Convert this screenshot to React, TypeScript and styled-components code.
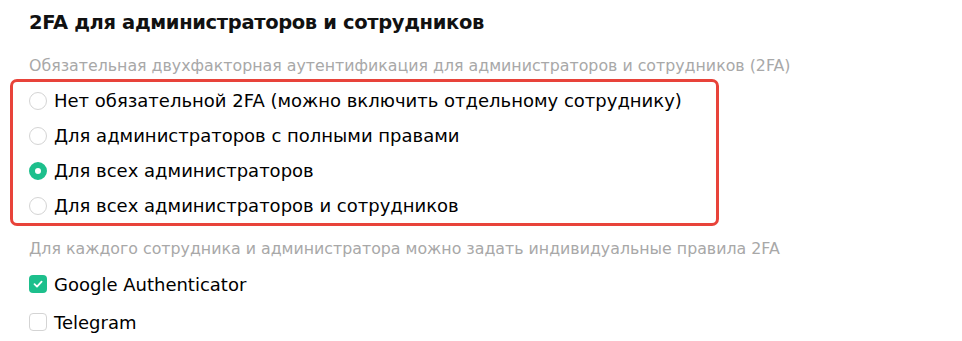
import { useState } from "react";
import styled, { createGlobalStyle } from "styled-components";

const GlobalStyle = createGlobalStyle`
	html, body {
		margin: 0;
		padding: 0;
		background: #ffffff;
	}
	body {
		font-family: "DejaVu Sans", "Noto Sans", sans-serif;
		color: #111111;
	}
`;

const Page = styled.div`
	width: 962px;
	height: 341px;
	box-sizing: border-box;
	padding: 9px 0 0 29px;
	overflow: hidden;
`;

const Title = styled.h2`
	margin: 0;
	font-size: 19.5px;
	font-weight: 700;
	line-height: 28px;
	letter-spacing: -0.35px;
	color: #111111;
`;

const Hint = styled.div<{ $top: number }>`
	margin-top: ${(props) => props.$top}px;
	font-size: 15.8px;
	line-height: 20px;
	color: #a8a8a8;
`;

const Highlight = styled.div`
	margin: 3px 0 0 -19px;
	width: 709px;
	box-sizing: border-box;
	border: 3px solid #e8433a;
	border-radius: 7px;
	padding: 1px 0 0 16px;
	display: flex;
	flex-direction: column;
`;

const OptionRow = styled.label`
	display: flex;
	align-items: center;
	gap: 7px;
	height: 35px;
	font-size: 18px;
	color: #000000;
	cursor: pointer;
`;

const Radio = styled.span<{ $checked: boolean }>`
	width: 18px;
	height: 18px;
	box-sizing: border-box;
	border-radius: 50%;
	flex-shrink: 0;
	background: #ffffff;
	border: ${(props) =>
		props.$checked ? "6px solid #1dbf8c" : "1.5px solid #d4d4d4"};
`;

const Methods = styled.div`
	display: flex;
	flex-direction: column;
	margin-top: 7px;
	gap: 2px;
`;

const CheckRow = styled.label`
	display: flex;
	align-items: center;
	gap: 7px;
	height: 36px;
	font-size: 18px;
	color: #000000;
	cursor: pointer;
`;

const Box = styled.span<{ $checked: boolean }>`
	width: 18px;
	height: 18px;
	box-sizing: border-box;
	border-radius: 4px;
	flex-shrink: 0;
	display: flex;
	align-items: center;
	justify-content: center;
	background: ${(props) => (props.$checked ? "#1dbf8c" : "#ffffff")};
	border: ${(props) => (props.$checked ? "none" : "1.5px solid #d4d4d4")};
`;

const options = [
	"Нет обязательной 2FA (можно включить отдельному сотруднику)",
	"Для администраторов с полными правами",
	"Для всех администраторов",
	"Для всех администраторов и сотрудников",
];

function App() {
	const [selected, setSelected] = useState(2);
	const [methods, setMethods] = useState({ google: true, telegram: false });

	return (
		<>
			<GlobalStyle />
			<Page>
				<Title>2FA для администраторов и сотрудников</Title>
				<Hint $top={19}>
					Обязательная двухфакторная аутентификация для администраторов и
					сотрудников (2FA)
				</Hint>
				<Highlight>
					{options.map((text, i) => (
						<OptionRow key={text} onClick={() => setSelected(i)}>
							<Radio $checked={selected === i} />
							{text}
						</OptionRow>
					))}
				</Highlight>
				<Hint $top={13}>
					Для каждого сотрудника и администратора можно задать индивидуальные
					правила 2FA
				</Hint>
				<Methods>
					<CheckRow
						onClick={() => setMethods({ ...methods, google: !methods.google })}
					>
						<Box $checked={methods.google}>
							{methods.google && (
								<svg width="12" height="12" viewBox="0 0 12 12">
									<path
										d="M2.5 6.2 L5 8.6 L9.6 3.6"
										fill="none"
										stroke="#ffffff"
										strokeWidth="1.8"
										strokeLinecap="round"
										strokeLinejoin="round"
									/>
								</svg>
							)}
						</Box>
						Google Authenticator
					</CheckRow>
					<CheckRow
						onClick={() =>
							setMethods({ ...methods, telegram: !methods.telegram })
						}
					>
						<Box $checked={methods.telegram} />
						Telegram
					</CheckRow>
				</Methods>
			</Page>
		</>
	);
}

export default App;
